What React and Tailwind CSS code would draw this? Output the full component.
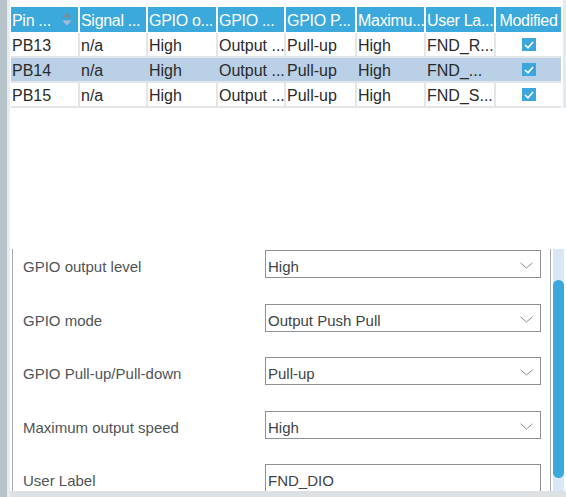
import React from "react";

const colW = ["w-[67px]", "w-[66px]", "w-[68px]", "w-[66px]", "w-[69px]", "w-[67px]", "w-[68px]", "w-[65px]"];
const headers = ["Pin ...", "Signal ...", "GPIO o...", "GPIO ...", "GPIO P...", "Maximu...", "User La...", "Modified"];
const rows = [
  ["PB13", "n/a", "High", "Output ...", "Pull-up", "High", "FND_R..."],
  ["PB14", "n/a", "High", "Output ...", "Pull-up", "High", "FND_..."],
  ["PB15", "n/a", "High", "Output ...", "Pull-up", "High", "FND_S..."],
];

function SortIcon() {
  return (
    <svg width="10" height="13" viewBox="0 0 10 13" className="shrink-0">
      <polygon points="5,0 9.5,4.5 0.5,4.5" fill="#7d8b98" />
      <polygon points="5,12.5 9.5,7.5 0.5,7.5" fill="#a9bccd" />
    </svg>
  );
}

function Check() {
  return (
    <div className="w-[14px] h-[13px] bg-[#3ba7dc] flex items-center justify-center">
      <svg width="10" height="8" viewBox="0 0 10 8">
        <polyline points="1,4 4,6.8 9,1" fill="none" stroke="white" strokeWidth="1.6" />
      </svg>
    </div>
  );
}

function Chevron() {
  return (
    <svg width="13" height="7" viewBox="0 0 13 7" className="shrink-0">
      <polyline points="0.5,0.8 6.5,6 12.5,0.8" fill="none" stroke="#8a8f94" strokeWidth="1" />
    </svg>
  );
}

function Field({ label, value, select }) {
  return (
    <div className="flex items-start h-[28px] shrink-0">
      <div className="pt-[8px] leading-[18px] w-[252px] pl-[10px] text-[15px] text-[#505458] whitespace-nowrap">{label}</div>
      <div className="w-[276px] h-[28px] border border-[#8c9196] bg-white flex items-start pl-[2px] pr-[7px] box-border">
        <span className="pt-[7px] leading-[18px] text-[15px] text-[#404448] flex-1 whitespace-nowrap">{value}</span>
        {select && (
          <span className="pt-[11px]">
            <Chevron />
          </span>
        )}
      </div>
    </div>
  );
}

export default function App() {
  return (
    <div
      className="w-[566px] h-[497px] flex bg-white overflow-hidden"
      style={{ fontFamily: '"Liberation Sans", Arial, sans-serif' }}
    >
      <div className="w-[7px] h-full bg-[#b8c4cb] shrink-0" />
      <div className="w-[3px] h-full bg-[#e9ecef] shrink-0" />
      <div className="flex-1 flex flex-col min-w-0">
        {/* table area */}
        <div className="flex">
          <div className="flex-1 pl-[1px]">
            <div className="h-[7px]" />
            <div className="flex gap-[2px] h-[25px]">
              {headers.map((h, i) => (
                <div
                  key={i}
                  className={`${colW[i]} bg-[#3ca9dd] text-white text-[16px] leading-[25px] tracking-[-0.3px] whitespace-nowrap overflow-hidden flex items-center ${i === 7 ? "justify-center" : "pl-[1px]"}`}
                >
                  <span className="pt-[1px]">{h}</span>
                  {i === 0 && (
                    <span className="ml-auto mr-[6px]">
                      <SortIcon />
                    </span>
                  )}
                </div>
              ))}
            </div>
            <div className="mt-[1px] w-[550px] flex flex-col gap-[2px] bg-[#e3e6e9] pb-[2px]">
              {rows.map((r, ri) => (
                <div key={ri} className={`flex gap-[2px] h-[23px] ${ri === 1 ? "bg-[#b9d0e6]" : ""}`}>
                  {r.map((c, ci) => (
                    <div
                      key={ci}
                      className={`${colW[ci]} ${ri === 1 ? "" : "bg-white"} text-[16px] leading-[23px] text-[#2a2a2a] pl-[1px] whitespace-nowrap overflow-hidden`}
                    >
                      <span className="block pt-[1px]">{c}</span>
                    </div>
                  ))}
                  <div className={`${colW[7]} ${ri === 1 ? "" : "bg-white"} flex items-center justify-center`}>
                    <Check />
                  </div>
                </div>
              ))}
            </div>
          </div>
          <div className="w-[3px] bg-[#e6e9ec] shrink-0" />
        </div>

        <div className="flex-1" />

        {/* property panel */}
        <div className="h-[242px] flex shrink-0">
          <div className="w-[2px]" />
          <div className="w-[1px] bg-[#a4a8ac]" />
          <div className="flex-1 flex flex-col gap-[25.5px] pt-[1px] overflow-hidden">
            <Field label="GPIO output level" value="High" select />
            <Field label="GPIO mode" value="Output Push Pull" select />
            <Field label="GPIO Pull-up/Pull-down" value="Pull-up" select />
            <Field label="Maximum output speed" value="High" select />
            <Field label="User Label" value="FND_DIO" />
          </div>
          <div className="w-[1px] bg-[#a4a8ac]" />
          <div className="w-[2px]" />
          <div className="w-[11px] bg-[#d7e7f5] pt-[31px] pb-[13px] flex flex-col">
            <div className="flex-1 bg-[#3ba7dc] rounded-full" />
          </div>
          <div className="w-[2px]" />
        </div>
        <div className="h-[6px] bg-[#dde1e4] shrink-0" />
      </div>
    </div>
  );
}
